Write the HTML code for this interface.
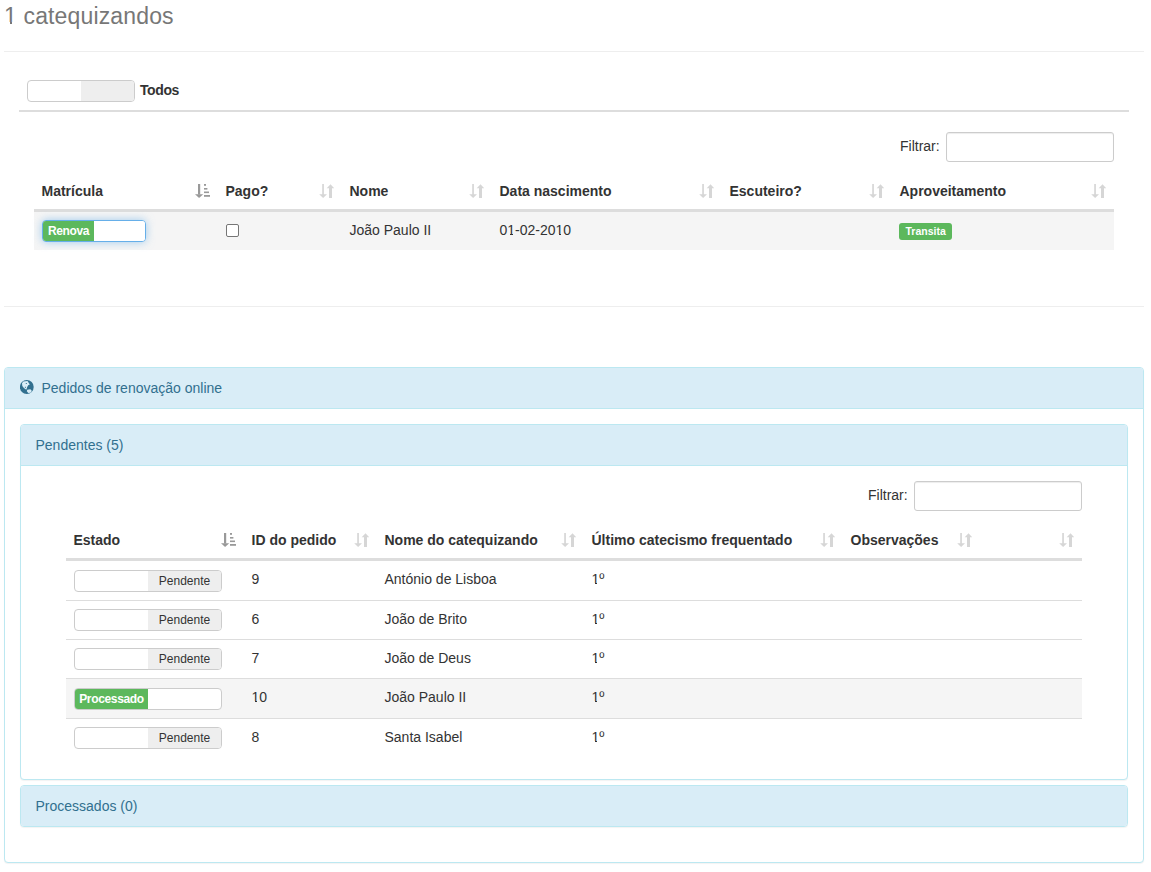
<!DOCTYPE html>
<html><head><meta charset="utf-8">
<style>
*{box-sizing:border-box;margin:0;padding:0}
html,body{width:1151px;height:872px;overflow:hidden;background:#fff}
body{font-family:"Liberation Sans",sans-serif;font-size:14px;line-height:20px;color:#333;position:relative}
.a{position:absolute;white-space:nowrap}
.b{font-weight:bold}
h3{position:absolute;left:4px;top:2.5px;font-size:23px;letter-spacing:0.15px;font-weight:normal;line-height:26px;color:#777;white-space:nowrap}
.hr{position:absolute;height:1px;background:#eee}
.sw{position:absolute;height:22px;border:1px solid #ccc;border-radius:4px;overflow:hidden;background:#fff}
.sw span{position:absolute;top:0;height:20px;font-size:12px;line-height:20px;text-align:center}
.sw .g{background:#eee;color:#333}
.sw .on{background:#5cb85c;color:#fff;font-weight:bold;font-size:12px;letter-spacing:-0.35px}
.foc{border-color:#66afe9;box-shadow:inset 0 1px 1px rgba(0,0,0,.075),0 0 8px rgba(102,175,233,.6);overflow:visible}
.foc span.on{border-radius:3px 0 0 3px}
.foc span.w{border-radius:0 3px 3px 0;background:#fff}
.inp{position:absolute;height:30px;border:1px solid #ccc;border-radius:3px;background:#fff;box-shadow:inset 0 1px 1px rgba(0,0,0,.075)}
.line{position:absolute;background:#ddd}
.rowbg{position:absolute;background:#f5f5f5}
.panel{position:absolute;border:1px solid #bce8f1;border-radius:4px;background:#fff;box-shadow:0 1px 1px rgba(0,0,0,.05)}
.ph{position:absolute;left:0;top:0;right:0;background:#d9edf7;color:#31708f;border-bottom:1px solid #bce8f1;height:41px;border-radius:3px 3px 0 0}
.ph span{position:absolute;top:10px;left:14.5px;white-space:nowrap}
.lbl{position:absolute;background:#5cb85c;color:#fff;font-size:10.5px;font-weight:bold;line-height:17px;height:17px;padding:0 6px;border-radius:3px;white-space:nowrap}
.cb{position:absolute;width:13px;height:13px;border:1px solid #767676;border-radius:2px;background:#fff}
svg.ic{position:absolute}
</style></head><body>
<h3>1 catequizandos</h3>
<div class="hr" style="left:4px;top:51px;width:1140px"></div>
<div class="sw" style="left:27px;top:80px;width:108px"><span style="left:0;width:53px"></span><span class="g" style="left:53px;width:53px"></span></div>
<div class="a b" style="left:140px;top:80px;letter-spacing:-0.4px">Todos</div>
<div class="line" style="left:19px;top:110px;width:1110px;height:2px"></div>
<div class="a" style="left:900px;top:136px">Filtrar:</div>
<div class="inp" style="left:946px;top:132px;width:168px"></div>
<div class="a b" style="left:41.5px;top:181px">Matrícula</div>
<svg class="ic" style="left:195px;top:184px" width="15" height="15" viewBox="0 0 15 15"><g fill="#999"><rect x="3" y="0" width="2.2" height="10.5"/><path d="M0 10.2h8.2l-4.1 3.9z"/><rect x="9" y="0" width="2" height="1.8"/><rect x="9" y="4" width="3.4" height="1.6"/><rect x="9" y="7.5" width="5" height="1.6"/><rect x="9" y="11" width="6" height="1.8"/></g></svg>
<div class="a b" style="left:225.5px;top:181px">Pago?</div>
<svg class="ic" style="left:319px;top:184px" width="15" height="15" viewBox="0 0 15 15"><g fill="#d6d6d6"><rect x="3.2" y="0" width="1.7" height="11"/><path d="M0.2 10.3h7.8l-3.9 3.7z"/><rect x="10" y="4" width="3" height="10"/><path d="M7.7 4.2h7.6l-3.8-4z"/></g></svg>
<div class="a b" style="left:349.5px;top:181px">Nome</div>
<svg class="ic" style="left:469px;top:184px" width="15" height="15" viewBox="0 0 15 15"><g fill="#d6d6d6"><rect x="3.2" y="0" width="1.7" height="11"/><path d="M0.2 10.3h7.8l-3.9 3.7z"/><rect x="10" y="4" width="3" height="10"/><path d="M7.7 4.2h7.6l-3.8-4z"/></g></svg>
<div class="a b" style="left:499.5px;top:181px">Data nascimento</div>
<svg class="ic" style="left:699px;top:184px" width="15" height="15" viewBox="0 0 15 15"><g fill="#d6d6d6"><rect x="3.2" y="0" width="1.7" height="11"/><path d="M0.2 10.3h7.8l-3.9 3.7z"/><rect x="10" y="4" width="3" height="10"/><path d="M7.7 4.2h7.6l-3.8-4z"/></g></svg>
<div class="a b" style="left:729.5px;top:181px">Escuteiro?</div>
<svg class="ic" style="left:869px;top:184px" width="15" height="15" viewBox="0 0 15 15"><g fill="#d6d6d6"><rect x="3.2" y="0" width="1.7" height="11"/><path d="M0.2 10.3h7.8l-3.9 3.7z"/><rect x="10" y="4" width="3" height="10"/><path d="M7.7 4.2h7.6l-3.8-4z"/></g></svg>
<div class="a b" style="left:899.5px;top:181px">Aproveitamento</div>
<svg class="ic" style="left:1091px;top:184px" width="15" height="15" viewBox="0 0 15 15"><g fill="#d6d6d6"><rect x="3.2" y="0" width="1.7" height="11"/><path d="M0.2 10.3h7.8l-3.9 3.7z"/><rect x="10" y="4" width="3" height="10"/><path d="M7.7 4.2h7.6l-3.8-4z"/></g></svg>
<div class="line" style="left:34px;top:209px;width:1080px;height:3px"></div>
<div class="rowbg" style="left:34px;top:212px;width:1080px;height:38px"></div>
<div class="sw foc" style="left:42px;top:220px;width:104px"><span class="on" style="left:0;width:51px">Renova</span><span class="w" style="left:51px;width:51px"></span></div>
<div class="cb" style="left:226px;top:224px"></div>
<div class="a" style="left:349.5px;top:220px">João Paulo II</div>
<div class="a" style="left:499.5px;top:220px">01-02-2010</div>
<div class="lbl" style="left:899px;top:223px;width:53px;padding:0 0 0 6.5px">Transita</div>
<div class="hr" style="left:4px;top:306px;width:1140px"></div>
<div class="panel" style="left:4px;top:367px;width:1140px;height:496px"><div class="ph"><svg style="position:absolute;left:15px;top:12px" width="15" height="15" viewBox="0 0 15 15"><circle cx="6.8" cy="7" r="6.9" fill="#31708f"/><path fill="#d9edf7" d="M3.4 1.5L7.5 1.1L8.8 3L9.8 4.6L8.2 5.3L7.2 7.1L6.8 8.5L6.2 9.7L3.9 8L2.3 5.9L2 3.2Z M7.2 9.8L10.4 9.2L11.9 10.9L10.4 12.8L8.3 13L6.8 11.3Z"/><rect x="5.8" y="3" width="1" height="1" fill="#31708f"/><rect x="4.9" y="6.8" width="1" height="1" fill="#31708f"/></svg><span style="left:36.5px">Pedidos de renovação online</span></div></div>
<div class="panel" style="left:20px;top:424px;width:1108px;height:356px"><div class="ph"><span>Pendentes (5)</span></div></div>
<div class="a" style="left:868px;top:485px">Filtrar:</div>
<div class="inp" style="left:914px;top:481px;width:168px"></div>
<div class="a b" style="left:73.5px;top:530px">Estado</div>
<svg class="ic" style="left:221px;top:533px" width="15" height="15" viewBox="0 0 15 15"><g fill="#999"><rect x="3" y="0" width="2.2" height="10.5"/><path d="M0 10.2h8.2l-4.1 3.9z"/><rect x="9" y="0" width="2" height="1.8"/><rect x="9" y="4" width="3.4" height="1.6"/><rect x="9" y="7.5" width="5" height="1.6"/><rect x="9" y="11" width="6" height="1.8"/></g></svg>
<div class="a b" style="left:251.5px;top:530px">ID do pedido</div>
<svg class="ic" style="left:354px;top:533px" width="15" height="15" viewBox="0 0 15 15"><g fill="#d6d6d6"><rect x="3.2" y="0" width="1.7" height="11"/><path d="M0.2 10.3h7.8l-3.9 3.7z"/><rect x="10" y="4" width="3" height="10"/><path d="M7.7 4.2h7.6l-3.8-4z"/></g></svg>
<div class="a b" style="left:384.5px;top:530px">Nome do catequizando</div>
<svg class="ic" style="left:561px;top:533px" width="15" height="15" viewBox="0 0 15 15"><g fill="#d6d6d6"><rect x="3.2" y="0" width="1.7" height="11"/><path d="M0.2 10.3h7.8l-3.9 3.7z"/><rect x="10" y="4" width="3" height="10"/><path d="M7.7 4.2h7.6l-3.8-4z"/></g></svg>
<div class="a b" style="left:591.5px;top:530px">Último catecismo frequentado</div>
<svg class="ic" style="left:820px;top:533px" width="15" height="15" viewBox="0 0 15 15"><g fill="#d6d6d6"><rect x="3.2" y="0" width="1.7" height="11"/><path d="M0.2 10.3h7.8l-3.9 3.7z"/><rect x="10" y="4" width="3" height="10"/><path d="M7.7 4.2h7.6l-3.8-4z"/></g></svg>
<div class="a b" style="left:850.5px;top:530px">Observações</div>
<svg class="ic" style="left:957px;top:533px" width="15" height="15" viewBox="0 0 15 15"><g fill="#d6d6d6"><rect x="3.2" y="0" width="1.7" height="11"/><path d="M0.2 10.3h7.8l-3.9 3.7z"/><rect x="10" y="4" width="3" height="10"/><path d="M7.7 4.2h7.6l-3.8-4z"/></g></svg>
<svg class="ic" style="left:1059px;top:533px" width="15" height="15" viewBox="0 0 15 15"><g fill="#d6d6d6"><rect x="3.2" y="0" width="1.7" height="11"/><path d="M0.2 10.3h7.8l-3.9 3.7z"/><rect x="10" y="4" width="3" height="10"/><path d="M7.7 4.2h7.6l-3.8-4z"/></g></svg>
<div class="line" style="left:66px;top:558px;width:1016px;height:3px"></div>
<div class="sw" style="left:74px;top:570px;width:148px"><span style="left:0;width:73px"></span><span class="g" style="left:73px;width:73px">Pendente</span></div>
<div class="a" style="left:251.5px;top:569px">9</div>
<div class="a" style="left:384.5px;top:569px">António de Lisboa</div>
<div class="a" style="left:591.5px;top:569px">1º</div>
<div class="line" style="left:66px;top:600px;width:1016px;height:1px"></div>
<div class="sw" style="left:74px;top:609px;width:148px"><span style="left:0;width:73px"></span><span class="g" style="left:73px;width:73px">Pendente</span></div>
<div class="a" style="left:251.5px;top:609px">6</div>
<div class="a" style="left:384.5px;top:609px">João de Brito</div>
<div class="a" style="left:591.5px;top:609px">1º</div>
<div class="line" style="left:66px;top:639px;width:1016px;height:1px"></div>
<div class="sw" style="left:74px;top:648px;width:148px"><span style="left:0;width:73px"></span><span class="g" style="left:73px;width:73px">Pendente</span></div>
<div class="a" style="left:251.5px;top:648px">7</div>
<div class="a" style="left:384.5px;top:648px">João de Deus</div>
<div class="a" style="left:591.5px;top:648px">1º</div>
<div class="rowbg" style="left:66px;top:679px;width:1016px;height:39px"></div>
<div class="line" style="left:66px;top:678px;width:1016px;height:1px"></div>
<div class="sw" style="left:74px;top:688px;width:148px"><span class="on" style="left:0;width:73px">Processado</span><span style="left:73px;width:73px"></span></div>
<div class="a" style="left:251.5px;top:687px">10</div>
<div class="a" style="left:384.5px;top:687px">João Paulo II</div>
<div class="a" style="left:591.5px;top:687px">1º</div>
<div class="line" style="left:66px;top:718px;width:1016px;height:1px"></div>
<div class="sw" style="left:74px;top:727px;width:148px"><span style="left:0;width:73px"></span><span class="g" style="left:73px;width:73px">Pendente</span></div>
<div class="a" style="left:251.5px;top:727px">8</div>
<div class="a" style="left:384.5px;top:727px">Santa Isabel</div>
<div class="a" style="left:591.5px;top:727px">1º</div>
<div class="panel" style="left:20px;top:785px;width:1108px;height:42px"><div class="ph" style="border-bottom:0;border-radius:3px;height:40px"><span>Processados (0)</span></div></div>
<div class="a" style="left:4px;top:22px;width:6px;height:2px;background:#fff"></div>
<div class="a" style="left:12px;top:22px;width:6px;height:2px;background:#fff"></div>
<div class="a" style="left:507px;top:234px;width:3px;height:1px;background:#f5f5f5"></div>
<div class="a" style="left:513px;top:234px;width:3px;height:1px;background:#f5f5f5"></div>
<div class="a" style="left:555px;top:234px;width:4px;height:1px;background:#f5f5f5"></div>
<div class="a" style="left:561px;top:234px;width:4px;height:1px;background:#f5f5f5"></div>
<div class="a" style="left:591px;top:583px;width:4px;height:1px;background:#fff"></div>
<div class="a" style="left:597px;top:583px;width:4px;height:1px;background:#fff"></div>
<div class="a" style="left:591px;top:623px;width:4px;height:1px;background:#fff"></div>
<div class="a" style="left:597px;top:623px;width:4px;height:1px;background:#fff"></div>
<div class="a" style="left:591px;top:662px;width:4px;height:1px;background:#fff"></div>
<div class="a" style="left:597px;top:662px;width:4px;height:1px;background:#fff"></div>
<div class="a" style="left:591px;top:701px;width:4px;height:1px;background:#f5f5f5"></div>
<div class="a" style="left:597px;top:701px;width:4px;height:1px;background:#f5f5f5"></div>
<div class="a" style="left:591px;top:741px;width:4px;height:1px;background:#fff"></div>
<div class="a" style="left:597px;top:741px;width:4px;height:1px;background:#fff"></div>
<div class="a" style="left:251px;top:701px;width:4px;height:1px;background:#f5f5f5"></div>
<div class="a" style="left:257px;top:701px;width:2px;height:1px;background:#f5f5f5"></div>
</body></html>
